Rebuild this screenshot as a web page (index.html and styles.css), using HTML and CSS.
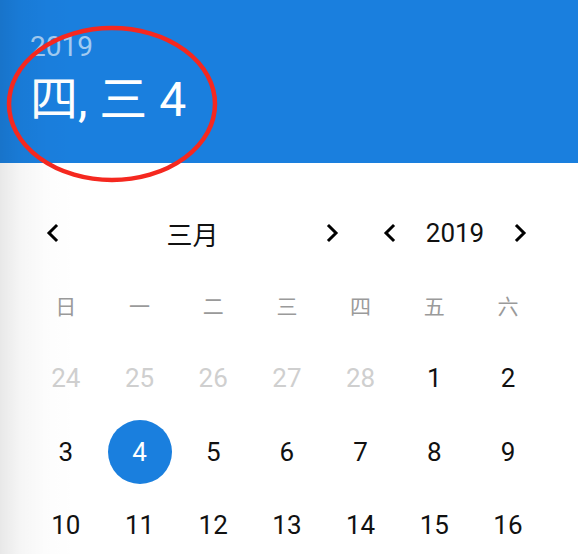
FILE: index.html
```html
<!DOCTYPE html>
<html lang="zh">
<head>
<meta charset="utf-8">
<link rel="stylesheet" href="styles.css">
</head>
<body>
<div class="page">
  <header class="header">
    <div class="year">2019</div>
    <div class="date">四, 三 4</div>
  </header>
  <div class="nav">
    <div class="pager month">
      <button class="btn"><svg viewBox="0 0 24 24" width="24" height="24"><path d="M15 5 L8 12 L15 19" /></svg></button>
      <div class="label">三月</div>
      <button class="btn"><svg viewBox="0 0 24 24" width="24" height="24"><path d="M9 5 L16 12 L9 19" /></svg></button>
    </div>
    <div class="pager yr">
      <button class="btn"><svg viewBox="0 0 24 24" width="24" height="24"><path d="M15 5 L8 12 L15 19" /></svg></button>
      <div class="label">2019</div>
      <button class="btn"><svg viewBox="0 0 24 24" width="24" height="24"><path d="M9 5 L16 12 L9 19" /></svg></button>
    </div>
  </div>
  <div class="grid">
    <div class="wd">日</div><div class="wd">一</div><div class="wd">二</div><div class="wd">三</div><div class="wd">四</div><div class="wd">五</div><div class="wd">六</div>
    <div class="day muted">24</div><div class="day muted">25</div><div class="day muted">26</div><div class="day muted">27</div><div class="day muted">28</div><div class="day">1</div><div class="day">2</div>
    <div class="day">3</div><div class="day"><span class="sel">4</span></div><div class="day">5</div><div class="day">6</div><div class="day">7</div><div class="day">8</div><div class="day">9</div>
    <div class="day">10</div><div class="day">11</div><div class="day">12</div><div class="day">13</div><div class="day">14</div><div class="day">15</div><div class="day">16</div>
  </div>
  <div class="shade"></div>
  <svg class="annot" width="578" height="554" viewBox="0 0 578 554"><ellipse cx="112" cy="104" rx="103" ry="76" /></svg>
</div>
</body>
</html>
```
FILE: styles.css
```css
html, body {
  margin: 0;
  padding: 0;
  background: #ffffff;
}
.page {
  position: relative;
  width: 578px;
  height: 554px;
  overflow: hidden;
  font-family: Roboto, "Noto Sans CJK SC", sans-serif;
  color: #111;
}
.header {
  height: 163px;
  background: #1a7fde;
  color: #fff;
  padding-left: 30px;
  box-sizing: border-box;
  display: flex;
  flex-direction: column;
}
.year {
  margin-top: 29px;
  font-size: 28px;
  line-height: 36px;
  color: rgba(255, 255, 255, 0.6);
}
.date {
  margin-top: 7px;
  font-size: 48px;
  line-height: 56px;
}
.nav {
  display: flex;
  margin-top: 46px;
  padding-left: 29px;
  height: 48px;
  gap: 10px;
}
.pager {
  display: flex;
  align-items: center;
}
.btn {
  width: 48px;
  height: 48px;
  border: 0;
  background: none;
  padding: 0;
  display: flex;
  align-items: center;
  justify-content: center;
}
.btn svg path {
  fill: none;
  stroke: #000;
  stroke-width: 3;
  stroke-linecap: square;
}
.btn svg {
  width: 24px;
  height: 24px;
}
.label {
  text-align: center;
  font-size: 26px;
  color: #111;
}
.month .label { width: 231px; }
.yr .label { width: 82px; }
.grid {
  margin-top: 11px;
  margin-left: 29px;
  display: grid;
  grid-template-columns: repeat(7, 73.7px);
  grid-auto-rows: 73.5px;
}
.wd, .day {
  display: flex;
  align-items: center;
  justify-content: center;
}
.wd {
  font-size: 21px;
  color: #9a9a9a;
}
.day {
  font-size: 26px;
  color: #111;
}
.day.muted {
  color: #cfcfcf;
}
.sel {
  width: 64px;
  height: 64px;
  border-radius: 50%;
  background: #1a7fde;
  color: #fff;
  display: flex;
  align-items: center;
  justify-content: center;
}
.shade {
  position: absolute;
  left: 0;
  top: 0;
  bottom: 0;
  width: 80px;
  background: linear-gradient(to right, rgba(0, 0, 0, 0.09) 0px, rgba(0, 0, 0, 0.04) 20px, rgba(0, 0, 0, 0.012) 45px, rgba(0, 0, 0, 0) 75px);
  pointer-events: none;
}
.annot {
  position: absolute;
  left: 0;
  top: 0;
  pointer-events: none;
}
.annot ellipse {
  fill: none;
  stroke: #f5281f;
  stroke-width: 4.5;
}
```
